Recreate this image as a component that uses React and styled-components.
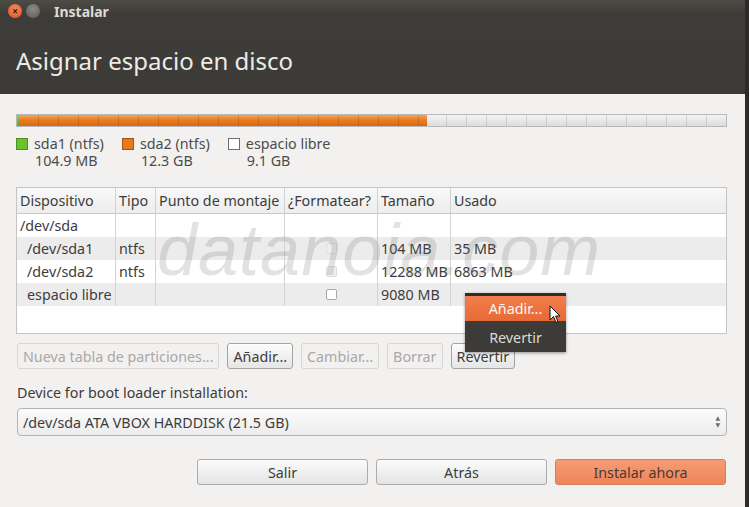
import styled, { createGlobalStyle } from "styled-components";

const Global = createGlobalStyle`
  html, body { margin: 0; padding: 0; }
  body {
    width: 749px;
    height: 507px;
    overflow: hidden;
    font-family: "Noto Sans", "DejaVu Sans", sans-serif;
    font-size: 14.3px;
    color: #3c3c3c;
  }
`;

const Window = styled.div`
  width: 745px;
  height: 507px;
  border-right: 4px solid #2c2b28;
  background: #f2f1f0;
  display: flex;
  flex-direction: column;
  position: relative;
`;

const Header = styled.div`
  height: 94px;
  background: linear-gradient(#4c4b46 0px, #3d3c38 14px, #3c3b37 100%);
  display: flex;
  flex-direction: column;
`;

const TitleBar = styled.div`
  height: 22px;
  display: flex;
  align-items: center;
  padding-left: 8px;
  gap: 4px;
`;

const WinButton = styled.span`
  width: 14px;
  height: 14px;
  border-radius: 50%;
  background: ${(p) =>
    p.$close
      ? "radial-gradient(circle at 50% 35%, #f7865a, #e0531f)"
      : "radial-gradient(circle at 50% 35%, #8d8b86, #5d5b57)"};
  color: #3c1a0c;
  font-size: 10px;
  line-height: 14px;
  text-align: center;
  font-weight: bold;
`;

const WinTitle = styled.span`
  margin-left: 10px;
  font-weight: bold;
  font-size: 14px;
  color: #dfdbd2;
`;

const PageTitle = styled.h1`
  margin: 0;
  padding: 22px 0 0 16px;
  font-size: 24px;
  font-weight: normal;
  color: #ecebe8;
`;

const Body = styled.div`
  padding: 20px 18px 0 16px;
  display: flex;
  flex-direction: column;
`;

const DiskBar = styled.div`
  height: 13px;
  display: flex;
  border: 1px solid #b8b8b8;
  box-sizing: border-box;
  overflow: hidden;
`;

const Segment = styled.div`
  height: 100%;
  background: ${(p) => p.$bg};
  position: relative;
  &::after {
    content: "";
    position: absolute;
    inset: 0;
    background: repeating-linear-gradient(
      90deg,
      transparent 0px,
      transparent 19px,
      rgba(0, 0, 0, 0.12) 19px,
      rgba(0, 0, 0, 0.12) 20px
    );
  }
`;

const Legend = styled.div`
  display: flex;
  gap: 18px;
  margin-top: 8px;
`;

const LegendItem = styled.div`
  display: flex;
  gap: 6px;
`;

const Swatch = styled.span`
  width: 10px;
  height: 10px;
  margin-top: 3px;
  background: ${(p) => p.$bg};
  border: 1px solid ${(p) => p.$border};
`;

const LegendText = styled.div`
  line-height: 17px;
  color: #4c4c4c;
  & > div:last-child {
    padding-left: 1px;
  }
`;

const TableBox = styled.div`
  margin-top: 18px;
  height: 147px;
  border: 1px solid #c4c4c4;
  box-sizing: border-box;
  background: #fff;
  position: relative;
  overflow: hidden;
`;

const Row = styled.div`
  display: grid;
  grid-template-columns: 99px 40px 129px 93px 73px 1fr;
  height: ${(p) => (p.$head ? "25px" : "23px")};
  background: ${(p) =>
    p.$head
      ? "linear-gradient(#f8f8f8, #ededed)"
      : p.$alt
      ? "#ececec"
      : "#ffffff"};
  border-bottom: ${(p) => (p.$head ? "1px solid #c8c8c8" : "none")};
`;

const Cell = styled.div`
  display: flex;
  align-items: center;
  justify-content: ${(p) => (p.$center ? "center" : "flex-start")};
  padding-left: ${(p) => (p.$indent ? "10px" : "3px")};
  border-right: 1px solid #d2d2d2;
  white-space: nowrap;
  overflow: hidden;
  color: #3c3c3c;
  &:last-child {
    border-right: none;
  }
`;

const Check = styled.span`
  width: 9px;
  height: 9px;
  border: 1px solid ${(p) => (p.$off ? "#dcdcdc" : "#a8a8a8")};
  border-radius: 2px;
  background: ${(p) => (p.$off ? "#efefef" : "#fff")};
  margin-right: 3px;
`;

const Watermark = styled.div`
  position: absolute;
  left: 140px;
  top: 21px;
  font-family: "Liberation Sans", sans-serif;
  font-style: italic;
  font-size: 72px;
  letter-spacing: 1px;
  color: rgba(110, 110, 110, 0.2);
  pointer-events: none;
`;

const ButtonRow = styled.div`
  display: flex;
  gap: 8px;
  margin-top: 9px;
  padding-left: 1px;
`;

const Button = styled.button`
  font-family: inherit;
  font-size: 14.3px;
  height: 26px;
  padding: 0 5px;
  border-radius: 3px;
  border: 1px solid ${(p) => (p.$disabled ? "#d6d6d6" : "#a3a3a3")};
  background: ${(p) =>
    p.$disabled ? "#f2f1f0" : "linear-gradient(#fbfbfb, #e6e6e6)"};
  color: ${(p) => (p.$disabled ? "#a8a8a8" : "#3c3c3c")};
  box-shadow: ${(p) =>
    p.$disabled ? "none" : "inset 0 1px 0 rgba(255,255,255,0.8)"};
`;

const Label = styled.div`
  margin-top: 14px;
  padding-left: 1px;
  color: #3c3c3c;
`;

const Combo = styled.div`
  margin-top: 6px;
  margin-left: 1px;
  height: 28px;
  border: 1px solid #b4b4b4;
  border-radius: 4px;
  box-sizing: border-box;
  background: linear-gradient(#fbfbfb, #ececec);
  display: flex;
  align-items: center;
  justify-content: space-between;
  padding: 0 6px 0 5px;
  color: #3c3c3c;
`;

const Arrows = styled.div`
  display: flex;
  flex-direction: column;
  gap: 2px;
  font-size: 6px;
  line-height: 5px;
  color: #6c6c6c;
`;

const Footer = styled.div`
  display: flex;
  justify-content: flex-end;
  gap: 8px;
  margin-top: 23px;
  padding-right: 1px;
`;

const BigButton = styled.button`
  font-family: inherit;
  font-size: 14.3px;
  width: 171px;
  height: 26px;
  border-radius: 3px;
  border: 1px solid ${(p) => (p.$primary ? "#d2805c" : "#acacac")};
  background: ${(p) =>
    p.$primary
      ? "linear-gradient(#f59c74, #f0845a)"
      : "linear-gradient(#fbfbfb, #e4e4e4)"};
  color: ${(p) => (p.$primary ? "#4a3a32" : "#3c3c3c")};
`;

const Menu = styled.div`
  position: absolute;
  left: 465px;
  top: 293px;
  width: 101px;
  background: #3c3b37;
  border-top: 3px solid #2e2d2a;
  padding-bottom: 2px;
  box-shadow: 0 1px 3px rgba(0, 0, 0, 0.4);
`;

const MenuItem = styled.div`
  height: 25px;
  display: flex;
  align-items: center;
  justify-content: center;
  color: ${(p) => (p.$active ? "#fff7f2" : "#dfdbd2")};
  background: ${(p) =>
    p.$active ? "linear-gradient(#f27d4c, #e76a36)" : "transparent"};
  margin-bottom: ${(p) => (p.$active ? "4px" : "0")};
`;

const Cursor = styled.svg`
  position: absolute;
  left: 549px;
  top: 305px;
`;

const rows = [
  { dev: "/dev/sda" },
  { dev: "/dev/sda1", type: "ntfs", check: "off", size: "104 MB", used: "35 MB", indent: true },
  { dev: "/dev/sda2", type: "ntfs", check: "off", size: "12288 MB", used: "6863 MB", indent: true },
  { dev: "espacio libre", check: "on", size: "9080 MB", indent: true },
];

export default function App() {
  return (
    <Window>
      <Global />
      <Header>
        <TitleBar>
          <WinButton $close>×</WinButton>
          <WinButton />
          <WinTitle>Instalar</WinTitle>
        </TitleBar>
        <PageTitle>Asignar espacio en disco</PageTitle>
      </Header>
      <Body>
        <DiskBar>
          <Segment $bg="linear-gradient(#8fd14a, #5fa82a)" style={{ width: 2 }} />
          <Segment $bg="linear-gradient(#f7a455, #e7791f 50%, #d66b15)" style={{ width: 408 }} />
          <Segment $bg="linear-gradient(#f4f4f4, #dcdcdc)" style={{ flex: 1 }} />
        </DiskBar>
        <Legend>
          <LegendItem>
            <Swatch $bg="#6cc22c" $border="#4e8f1e" />
            <LegendText>
              <div>sda1 (ntfs)</div>
              <div>104.9 MB</div>
            </LegendText>
          </LegendItem>
          <LegendItem>
            <Swatch $bg="#e8781c" $border="#a8520c" />
            <LegendText>
              <div>sda2 (ntfs)</div>
              <div>12.3 GB</div>
            </LegendText>
          </LegendItem>
          <LegendItem>
            <Swatch $bg="#ffffff" $border="#707070" />
            <LegendText>
              <div>espacio libre</div>
              <div>9.1 GB</div>
            </LegendText>
          </LegendItem>
        </Legend>
        <TableBox>
          <Row $head>
            <Cell>Dispositivo</Cell>
            <Cell>Tipo</Cell>
            <Cell>Punto de montaje</Cell>
            <Cell>¿Formatear?</Cell>
            <Cell>Tamaño</Cell>
            <Cell>Usado</Cell>
          </Row>
          {rows.map((r, i) => (
            <Row key={r.dev} $alt={i % 2 === 1}>
              <Cell $indent={r.indent}>{r.dev}</Cell>
              <Cell>{r.type}</Cell>
              <Cell />
              <Cell $center>{r.check && <Check $off={r.check === "off"} />}</Cell>
              <Cell>{r.size}</Cell>
              <Cell>{r.used}</Cell>
            </Row>
          ))}
          <Watermark>datanoia.com</Watermark>
        </TableBox>
        <ButtonRow>
          <Button $disabled>Nueva tabla de particiones...</Button>
          <Button>Añadir...</Button>
          <Button $disabled>Cambiar...</Button>
          <Button $disabled>Borrar</Button>
          <Button>Revertir</Button>
        </ButtonRow>
        <Label>Device for boot loader installation:</Label>
        <Combo>
          <span>/dev/sda ATA VBOX HARDDISK (21.5 GB)</span>
          <Arrows>
            <span>▲</span>
            <span>▼</span>
          </Arrows>
        </Combo>
        <Footer>
          <BigButton>Salir</BigButton>
          <BigButton>Atrás</BigButton>
          <BigButton $primary>Instalar ahora</BigButton>
        </Footer>
      </Body>
      <Menu>
        <MenuItem $active>Añadir...</MenuItem>
        <MenuItem>Revertir</MenuItem>
      </Menu>
      <Cursor width="12" height="19" viewBox="0 0 12 19">
        <path d="M1 1 L1 15 L4.5 11.5 L7 17.5 L9 16.6 L6.6 11 L11 11 Z" fill="#fff" stroke="#111" strokeWidth="1" strokeLinejoin="round" />
      </Cursor>
    </Window>
  );
}
